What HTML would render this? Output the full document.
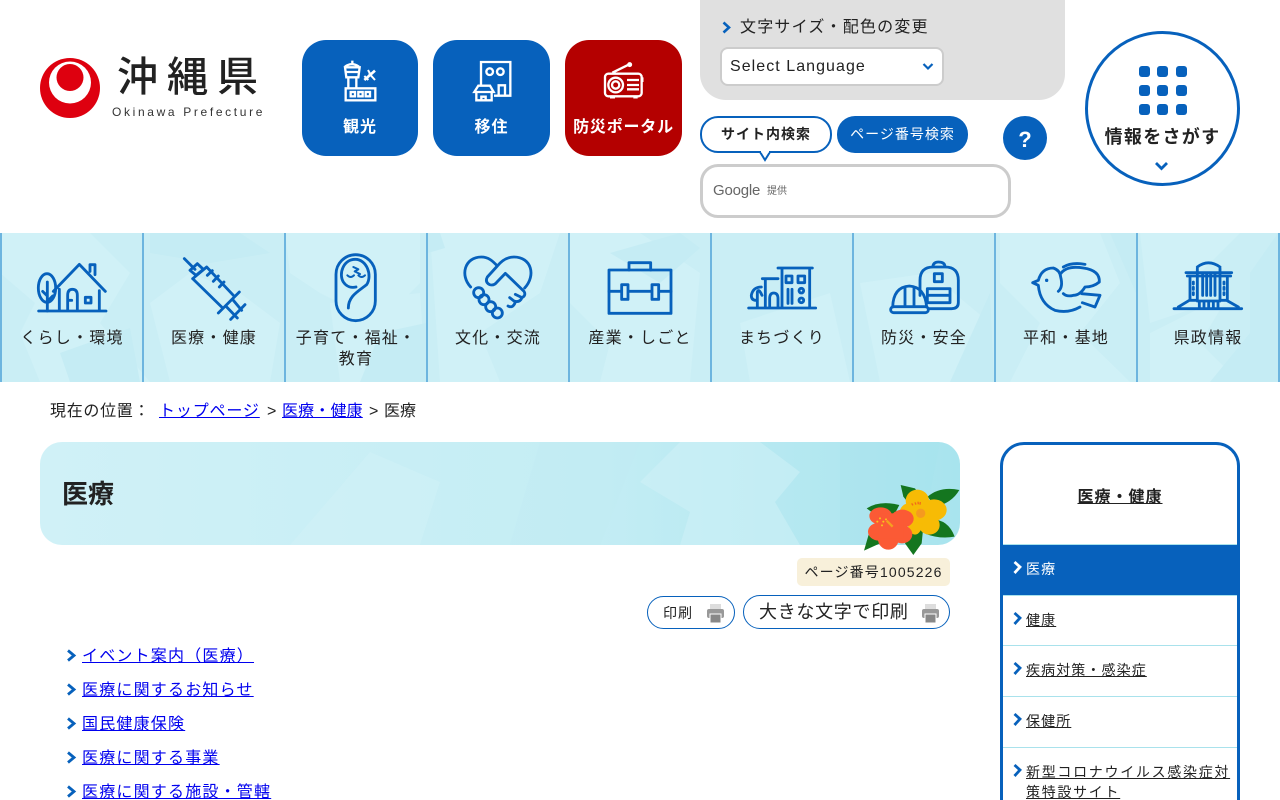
<!DOCTYPE html>
<html lang="ja"><head><meta charset="utf-8"><title>医療</title>
<style>
*{box-sizing:border-box}
html,body{margin:0;padding:0;width:1280px;height:800px;overflow:hidden;background:#fff}
body{position:relative;font-family:"Liberation Sans","Noto Sans CJK JP",sans-serif;color:#222}
.a{position:absolute;white-space:nowrap}
svg{position:absolute;overflow:visible}
.btn{position:absolute;top:40px;height:116px;border-radius:24px;background:#0761bc;color:#fff;font-weight:700;font-size:16px;text-align:center;padding-top:77px;line-height:22px;letter-spacing:1px}
.nav{left:0;width:142px;text-align:center;font-size:16px;letter-spacing:1.2px;color:#222;line-height:21px;position:absolute;top:328px;white-space:normal;padding:0 10px}
a{color:#00e}
.l{position:absolute;left:82px;font-size:16px;letter-spacing:1.2px;line-height:22px;white-space:nowrap}
.s{position:absolute;left:1026px;font-size:14px;letter-spacing:1.1px;line-height:20px;color:#222;text-decoration:underline;width:208px}
.h{position:absolute;left:1003px;width:234px;height:1px;background:#a9e2ec}
.pb{position:absolute;background:#fff;border:1px solid #0761bc;border-radius:17px}
.b{position:absolute;top:401px;font-size:16px;line-height:21px;white-space:nowrap}
</style></head><body>

<!-- logo -->
<svg style="left:0;top:0" width="300" height="130">
<circle cx="70" cy="88" r="30" fill="#de000f"/>
<circle cx="70" cy="82.500" r="21" fill="#fff"/>
<circle cx="70" cy="77.500" r="13.500" fill="#de000f"/>
</svg>
<div class="a" style="left:117px;top:51px;font-size:41px;line-height:52px;letter-spacing:9px;font-weight:500;color:#222">沖縄県</div>
<div class="a" style="left:112px;top:105px;font-size:12px;line-height:15px;letter-spacing:2.650px;color:#333">Okinawa Prefecture</div>

<!-- top buttons -->
<div class="btn" style="left:302px;width:116px">観光</div>
<div class="btn" style="left:433px;width:117px">移住</div>
<div class="btn" style="left:565px;width:117px;background:#b40000;letter-spacing:.8px">防災ポータル</div>
<svg style="left:295px;top:30px" width="400" height="135" viewBox="0 0 1200 405" fill="none" stroke="#fff" stroke-width="7">
<path d="M172 92V100M150 110Q170 95 192 110M150 112H194L190 142H154ZM150 126H194M160 142V175M184 142V175"/>
<rect x="152" y="175" width="89" height="36"/>
<rect x="167" y="186" width="13" height="13"/><rect x="190" y="186" width="13" height="13"/><rect x="212" y="186" width="13" height="13"/>
<path d="M208 150L240 122" stroke-width="8"/><path d="M219 120L228 136M222 130L240 150M208 138L220 150" stroke-width="6"/>
<path d="M558 166V96H646V197H597M611 197V166H630V197"/>
<circle cx="584" cy="125" r="10"/><circle cx="616" cy="125" r="10"/>
<path d="M550 167H585L596 186H538ZM544 186V211H590V186M559 211V200H572V211"/>
<rect x="930" y="131" width="110" height="68" rx="10"/>
<path d="M952 128L1003 103"/><circle cx="1004" cy="104" r="4" fill="#fff"/>
<circle cx="962" cy="165" r="22"/><circle cx="962" cy="165" r="11"/>
<path d="M996 150H1032M996 165H1032M996 178H1032M1042 142V156M945 202H960M1015 202H1028"/>
</svg>

<!-- grey panel -->
<div class="a" style="left:700px;top:0;width:365px;height:100px;background:#e0e0e0;border-radius:0 0 26px 26px"></div>
<svg style="left:720px;top:20px" width="14" height="16" fill="none" stroke="#0761bc" stroke-width="2.600"><path d="M3.500 2.500L9 7.500 3.500 12.500"/></svg>
<div class="a" style="left:740px;top:17px;font-size:16px;line-height:22px;letter-spacing:1.200px">文字サイズ・配色の変更</div>
<div class="a" style="left:720px;top:47px;width:224px;height:39px;background:#fff;border:2.500px solid #ccc;border-radius:8px"></div>
<div class="a" style="left:730px;top:56px;font-size:16px;line-height:21px;letter-spacing:1.050px;color:#222">Select Language</div>
<svg style="left:920px;top:60px" width="16" height="14" fill="none" stroke="#0761bc" stroke-width="2.200"><path d="M3.500 4L8 8.500 12.500 4"/></svg>

<!-- search tabs -->
<div class="a" style="left:700px;top:116px;width:132px;height:37px;border:2.500px solid #0761bc;border-radius:18px;background:#fff;text-align:center;font-size:14px;font-weight:700;line-height:32px;letter-spacing:1px">サイト内検索</div>
<svg style="left:758px;top:151px" width="16" height="12"><path d="M2 1L7 9 12 1" fill="#fff" stroke="#0761bc" stroke-width="2"/><path d="M3 0H11V1.500H3Z" fill="#fff"/></svg>
<div class="a" style="left:837px;top:116px;width:131px;height:37px;border-radius:18px;background:#0761bc;color:#fff;text-align:center;font-size:14px;line-height:37px;letter-spacing:1px">ページ番号検索</div>
<div class="a" style="left:1003px;top:116px;width:44px;height:44px;border-radius:50%;background:#0761bc;color:#fff;text-align:center;font-size:22px;font-weight:700;line-height:47px">?</div>
<div class="a" style="left:700px;top:164px;width:311px;height:54px;border:3.500px solid #ccc;border-radius:18px;background:#fff"></div>
<div class="a" style="left:713px;top:181px;font-size:15px;line-height:19px;color:#666;letter-spacing:-.2px">Google</div>
<div class="a" style="left:767px;top:186px;font-size:10px;line-height:12px;color:#666">提供</div>

<!-- info circle -->
<div class="a" style="left:1085px;top:31px;width:155px;height:155px;border:3px solid #0761bc;border-radius:50%;background:#fff"></div>
<svg style="left:1138px;top:65px" width="50" height="50" fill="#0761bc">
<rect x="1" y="1" width="11" height="11" rx="3"/><rect x="19" y="1" width="11" height="11" rx="3"/><rect x="38" y="1" width="11" height="11" rx="3"/>
<rect x="1" y="20" width="11" height="11" rx="3"/><rect x="19" y="20" width="11" height="11" rx="3"/><rect x="38" y="20" width="11" height="11" rx="3"/>
<rect x="1" y="39" width="11" height="11" rx="3"/><rect x="19" y="39" width="11" height="11" rx="3"/><rect x="38" y="39" width="11" height="11" rx="3"/>
</svg>
<div class="a" style="left:1085px;width:155px;top:124px;text-align:center;font-size:18px;line-height:26px;font-weight:700;letter-spacing:1.300px">情報をさがす</div>
<svg style="left:1154px;top:161px" width="16" height="12" fill="none" stroke="#0761bc" stroke-width="2.800"><path d="M2 2L7.500 7.500 13 2"/></svg>

<!-- nav background -->
<svg style="left:0;top:233px" width="1280" height="149" viewBox="0 0 1280 149">
<rect width="1280" height="149" fill="#caeef5"/>
<g fill="#d0f1f7">
<path d="M0 0H90L130 40 100 90 150 149H40L20 100 35 70 0 40Z"/>
<path d="M150 70L190 40 240 60 280 90 270 149H170Z"/>
<path d="M285 0H420V50L380 90 320 60 290 40Z"/>
<path d="M330 70L420 60 426 149H340Z"/>
<path d="M430 0H560L540 60 480 100 500 149H440Z"/>
<path d="M570 0H640L700 40 690 149H600L610 110 570 70Z"/>
<path d="M860 50L930 40 990 90 960 149H880Z"/>
<path d="M740 90L830 60 850 149H750Z"/>
<path d="M1000 0H1100L1120 50 1080 100 1130 149H1010L1040 90 1000 50Z"/>
<path d="M1140 0H1240L1200 40 1210 70 1150 90Z"/>
<path d="M1150 100L1230 60 1200 110 1240 149H1150Z"/>
</g>
<g fill="#c5ecf4">
<path d="M60 120L130 95 140 149H70Z"/>
<path d="M150 0H240L270 20 210 30 150 20Z"/>
<path d="M428 0H440L445 15 428 20Z"/>
<path d="M610 20L680 0 700 15 660 50Z"/>
<path d="M380 100L426 90 426 149H360Z"/>
<path d="M1250 40L1278 0V149H1210L1250 100Z"/>
<path d="M990 60L994 149H950Z"/>
<path d="M1110 0H1136V60Z"/>
</g>
<g fill="#6db5df">
<rect x="0" width="2" height="149"/><rect x="142" width="2" height="149"/><rect x="284" width="2" height="149"/><rect x="426" width="2" height="149"/><rect x="568" width="2" height="149"/><rect x="710" width="2" height="149"/><rect x="852" width="2" height="149"/><rect x="994" width="2" height="149"/><rect x="1136" width="2" height="149"/><rect x="1278" width="2" height="149"/>
</g>
</svg>

<!-- nav icons -->
<svg style="left:0;top:232px" width="1280" height="150" viewBox="0 0 3840 450" fill="none" stroke="#0761bc" stroke-width="8.500" stroke-linecap="round" stroke-linejoin="round">
<path d="M116 237H318M160 178L238 97 316 178M270 118V98H285V128M178 172V237M298 176V237M203 237V190Q203 172 217 172Q232 172 232 190V237M205 205H215"/>
<rect x="256" y="196" width="17" height="17"/>
<ellipse cx="141" cy="168" rx="26" ry="43"/>
<path d="M142 150V237M142 192L128 178M142 208L158 192"/>
<path d="M553 80L585 112M570 115L592 95 610 112 588 130ZM578 140L620 105 700 190 M578 140L665 225M718 180L655 243M622 130L637 116M640 148L655 132M658 165L672 150M680 225L712 258M700 205L725 235M735 218L692 262"/>
<rect x="1008" y="68" width="118" height="198" rx="59"/>
<path d="M1045 228C1045 192 1075 178 1100 158C1118 130 1100 82 1066 82C1030 82 1015 125 1030 150C1040 165 1055 168 1068 165"/>
<path d="M1042 130Q1052 140 1062 130M1075 130Q1085 140 1095 130M1060 105L1075 112 1064 118 1080 126" stroke-width="6"/>
<g transform="translate(1284 0)">
<path d="M128 165C95 130 110 75 160 75C182 75 195 88 208 102M290 168C325 130 310 75 258 75C238 75 222 85 208 102L178 135Q170 150 185 158Q198 162 207 150L232 124L288 178Q295 190 282 197L262 187M282 197Q275 213 258 207L245 197M262 210Q255 230 240 222"/>
<circle cx="152" cy="182" r="15"/><circle cx="168" cy="203" r="15"/><circle cx="188" cy="224" r="15"/><circle cx="208" cy="243" r="15"/>
</g>
<g transform="translate(1284 0)">
<rect x="543" y="114" width="186" height="130"/>
<path d="M603 114V92H668V114M543 178H580M602 178H671M694 178H729"/>
<rect x="581" y="158" width="19" height="44"/><rect x="672" y="158" width="20" height="44"/>
<path d="M962 228H1163M1050 108H1153M1062 108V228M1145 108V228M1080 172V214M1092 172V214M1003 140H1050M1012 140V228M1025 228V200Q1025 183 1037 183Q1050 183 1050 200V228M1000 165Q975 165 970 190Q970 205 985 205M988 228V180Q992 168 1002 190"/>
<rect x="1074" y="132" width="18" height="20"/><rect x="1110" y="132" width="20" height="20"/>
<circle cx="1120" cy="176" r="7"/><circle cx="1120" cy="205" r="7"/>
</g>
<g transform="translate(2550 0)">
<path d="M210 190V145Q210 105 250 105H285Q325 105 325 145V212Q325 230 305 230H238M248 105Q250 90 265 90Q285 90 285 105M232 170H300V212H232ZM232 190H300"/>
<rect x="253" y="125" width="24" height="24"/>
<path d="M128 225Q130 165 178 162Q225 165 230 225M165 165V222M192 165V222"/>
<rect x="122" y="224" width="113" height="18" rx="9"/>
<path d="M690 225Q655 245 615 235Q570 215 565 160L548 152 565 145Q575 108 610 108Q630 115 632 135Q640 165 625 178M632 125Q650 100 700 108Q750 115 748 150Q730 165 705 165Q690 190 670 190Q650 195 640 185M640 105Q665 90 705 97M695 185L750 190 735 225 697 212"/>
<circle cx="590" cy="145" r="5" fill="#0761bc" stroke="none"/>
<path d="M972 230H1175M1042 105Q1075 80 1110 105M1008 122H1145M1012 132H1142M1020 135V205M1042 110V205M1110 110V205M1132 135V205M1058 125V190M1070 125V190M1082 125V190M1095 125V190M985 225L1018 205H1042M1165 225L1130 205H1110M1042 207H1110M1048 210V228M1062 210V228M1076 210V228M1090 210V228M1104 210V228M1030 150V156M1030 166V172M1030 182V188M1122 150V156M1122 166V172M1122 182V188"/>
</g>
</svg>

<div class="nav" style="left:1px;">くらし・環境</div>
<div class="nav" style="left:143px;">医療・健康</div>
<div class="nav" style="left:285px;">子育て・福祉・教育</div>
<div class="nav" style="left:427px;">文化・交流</div>
<div class="nav" style="left:569px;">産業・しごと</div>
<div class="nav" style="left:711px;">まちづくり</div>
<div class="nav" style="left:853px;">防災・安全</div>
<div class="nav" style="left:995px;">平和・基地</div>
<div class="nav" style="left:1137px;">県政情報</div>

<!-- breadcrumb -->
<div class="b" style="left:50px;letter-spacing:.7px">現在の位置：</div>
<div class="b" style="left:159px;letter-spacing:.85px"><a href="#">トップページ</a></div>
<div class="b" style="left:267px">&gt;</div>
<div class="b" style="left:282px;letter-spacing:.15px"><a href="#">医療・健康</a></div>
<div class="b" style="left:369px">&gt;</div>
<div class="b" style="left:384px;letter-spacing:0">医療</div>

<!-- title -->
<svg style="left:40px;top:442px" width="920" height="103" viewBox="0 0 920 103">
<defs><linearGradient id="g"><stop offset="0" stop-color="#d0f1f7"/><stop offset=".6" stop-color="#c4edf4"/><stop offset="1" stop-color="#a8e4ee"/></linearGradient>
<clipPath id="c"><rect width="920" height="103" rx="22"/></clipPath></defs>
<g clip-path="url(#c)"><rect width="920" height="103" fill="url(#g)"/>
<path d="M640 0H720L760 30 735 60 760 103H640L650 70 600 40ZM330 10L400 40 380 103H250Z" fill="#d2f2f7" opacity=".5"/>
<path d="M800 0H900L880 103H800Z" fill="#a6e1ec" opacity=".3"/>
<path d="M500 0H600L560 103H470Z" fill="#c0ebf3" opacity=".4"/>
</g></svg>
<div class="a" style="left:62px;top:475px;font-size:26px;font-weight:700;line-height:38px;color:#222">医療</div>

<!-- flower -->
<svg style="left:860px;top:480px" width="105" height="80" viewBox="0 0 315 240">
<g fill="#14761f">
<path d="M122 15L165 25 185 55 150 75 130 50Z"/>
<path d="M203 50Q240 18 298 30Q275 70 225 80Z"/>
<path d="M215 118Q265 118 284 170Q240 178 198 162Z"/>
<path d="M20 85Q60 60 118 75L100 110 40 100Z"/>
<path d="M30 150L60 190 12 212Z"/>
<path d="M135 190L158 150 190 140 185 190 160 225Z"/>
</g>
<g fill="#f7bb05">
<ellipse cx="172" cy="62" rx="35" ry="33"/><ellipse cx="222" cy="90" rx="38" ry="32"/><ellipse cx="208" cy="135" rx="31" ry="29"/><ellipse cx="150" cy="98" rx="31" ry="29"/><ellipse cx="165" cy="128" rx="22" ry="36"/><circle cx="182" cy="100" r="30"/>
</g>
<circle cx="182" cy="100" r="14" fill="#f59a1f"/>
<path d="M155 70l4 6m6-9l3 7m6-9l1 8m6-7l-1 8" stroke="#f26a1b" stroke-width="4"/>
<g fill="#fb5a35">
<ellipse cx="62" cy="108" rx="34" ry="26"/><ellipse cx="127" cy="116" rx="34" ry="27"/><ellipse cx="57" cy="155" rx="33" ry="27"/><ellipse cx="85" cy="177" rx="31" ry="32"/><ellipse cx="126" cy="163" rx="31" ry="27"/><rect x="55" y="100" width="75" height="75"/>
</g>
<path d="M98 140L80 122" stroke="#f5a020" stroke-width="7"/>
<g fill="#f8c61c"><circle cx="60" cy="115" r="3"/><circle cx="70" cy="125" r="3"/><circle cx="52" cy="125" r="3"/><circle cx="78" cy="118" r="3"/><circle cx="66" cy="136" r="3"/></g>
</svg>

<!-- page number -->
<div class="a" style="left:797px;top:558px;width:153px;height:28px;background:#f8f0da;border-radius:5px;text-align:center;font-size:14px;line-height:29px;letter-spacing:1.150px">ページ番号1005226</div>

<!-- print -->
<div class="pb" style="left:647px;top:596px;width:88px;height:33px"></div>
<div class="a" style="left:663px;top:603px;font-size:14px;line-height:20px;letter-spacing:1px">印刷</div>
<div class="pb" style="left:743px;top:595px;width:207px;height:34px"></div>
<div class="a" style="left:759px;top:601px;font-size:18px;line-height:23px;letter-spacing:.7px">大きな文字で印刷</div>
<svg style="left:707px;top:603px" width="17" height="20"><rect x="3" y="1" width="11" height="5" fill="#ddd"/><rect y="6" width="17" height="9" rx="2" fill="#999"/><rect x="3" y="11" width="11" height="9" fill="#888" stroke="#fff"/></svg>
<svg style="left:922px;top:603px" width="17" height="20"><rect x="3" y="1" width="11" height="5" fill="#ddd"/><rect y="6" width="17" height="9" rx="2" fill="#999"/><rect x="3" y="11" width="11" height="9" fill="#888" stroke="#fff"/></svg>

<!-- list -->
<svg style="left:66px;top:647px" width="12" height="152" fill="none" stroke="#0761bc" stroke-width="2.800">
<path d="M2 3.500L8 8.500 2 13.500M2 37.500L8 42.500 2 47.500M2 71.500L8 76.500 2 81.500M2 105.500L8 110.500 2 115.500M2 139.500L8 144.500 2 149.500"/>
</svg>
<div class="l" style="top:646px"><a href="#">イベント案内（医療）</a></div>
<div class="l" style="top:680px"><a href="#">医療に関するお知らせ</a></div>
<div class="l" style="top:714px"><a href="#">国民健康保険</a></div>
<div class="l" style="top:748px"><a href="#">医療に関する事業</a></div>
<div class="l" style="top:782px"><a href="#">医療に関する施設・管轄</a></div>

<!-- sidebar -->
<div class="a" style="left:1000px;top:442px;width:240px;height:370px;border:3px solid #0761bc;border-radius:24px 24px 0 0;background:#fff"></div>
<div class="a" style="left:1000px;width:240px;top:487px;text-align:center;font-size:16px;font-weight:700;line-height:21px;text-decoration:underline;letter-spacing:1px">医療・健康</div>
<div class="a" style="left:1003px;top:545px;width:234px;height:50px;background:#0761bc"></div>
<div class="h" style="top:544px"></div><div class="h" style="top:595px"></div><div class="h" style="top:645px"></div><div class="h" style="top:696px"></div><div class="h" style="top:747px"></div>
<svg style="left:1012px;top:559px" width="12" height="240" fill="none" stroke="#0761bc" stroke-width="2.800">
<path d="M2.500 3L8 8 2.500 14" stroke="#fff"/><path d="M2.500 54L8 59 2.500 65M2.500 104L8 109 2.500 115M2.500 155L8 160 2.500 166M2.500 206L8 211 2.500 217"/>
</svg>
<div class="s" style="top:559px;color:#fff;text-decoration:none">医療</div>
<div class="s" style="top:610px">健康</div>
<div class="s" style="top:660px">疾病対策・感染症</div>
<div class="s" style="top:711px">保健所</div>
<div class="s" style="top:762px;letter-spacing:1.700px">新型コロナウイルス感染症対策特設サイト</div>
</body></html>
